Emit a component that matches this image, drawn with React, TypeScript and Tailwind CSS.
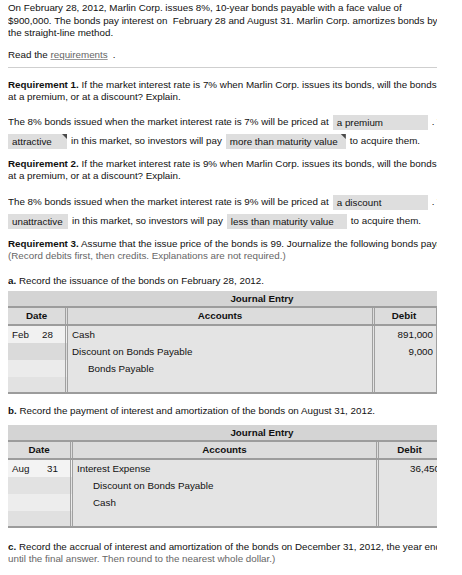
import React from 'react';

interface Row {
    month?: string;
    day?: string;
    account: string;
    indent?: boolean;
    debit?: string;
    dateBg: string;
}

interface JournalProps {
    dateW: string;
    accW: string;
    debitW: string;
    monthW: string;
    rows: Row[];
}

const Choice: React.FC<{ text: string; w: string; mark?: boolean }> = ({ text, w, mark }) => (
    <span className={`relative inline-block h-[15px] bg-[#dedede] pl-[4px] leading-[15px] align-middle mx-[4px] ${w}`}>
        {text}
        {mark && (
            <span className="absolute right-0 top-0 w-[5px] h-[5px] bg-[#4a4a4a] [clip-path:polygon(0_0,100%_0,100%_100%)]" />
        )}
    </span>
);

const JournalTable: React.FC<JournalProps> = ({ dateW, accW, debitW, monthW, rows }) => {
    return (
        <div className="w-[520px] bg-[#e4e4e4]">
            {/* barra de título */}
            <div className="h-[17px] bg-[#d4d4d4] border-b-2 border-[#9c9c9c] flex">
                <div className="w-[508px] text-center font-bold leading-[15px]">Journal Entry</div>
            </div>
            {/* cabeçalho das colunas */}
            <div className="h-[18px] bg-[#dcdcdc] border-b-2 border-[#9c9c9c] flex font-bold leading-[16px]">
                <div className={`${dateW} text-center border-r-[3px] border-double border-[#a0a0a0]`}>Date</div>
                <div className={`${accW} text-center border-r-[3px] border-double border-[#a0a0a0]`}>Accounts</div>
                <div className={`${debitW} text-center border-r-[3px] border-double border-[#a0a0a0]`}>Debit</div>
                <div className="flex-1 text-center">Credit</div>
            </div>
            {rows.map((row, i) => (
                <div key={i} className={`flex leading-[17px] ${i === rows.length - 1 ? 'h-[15px]' : 'h-[17px]'}`}>
                    <div className={`${dateW} ${row.dateBg} flex border-r-[3px] border-double border-[#a0a0a0] pl-[4px]`}>
                        <span className={monthW}>{row.month}</span>
                        <span>{row.day}</span>
                    </div>
                    <div className={`${accW} border-r-[3px] border-double border-[#a0a0a0] ${row.indent ? 'pl-[20px]' : 'pl-[4px]'}`}>
                        {row.account}
                    </div>
                    <div className={`${debitW} border-r-[3px] border-double border-[#a0a0a0] text-right`}>{row.debit}</div>
                    <div className="flex-1" />
                </div>
            ))}
            <div className="h-[2px] bg-[#9c9c9c]" />
        </div>
    );
};

export default function App() {
    const rowsA: Row[] = [
        { month: 'Feb', day: '28', account: 'Cash', debit: '891,000', dateBg: 'bg-[#f1f1f1]' },
        { account: 'Discount on Bonds Payable', debit: '9,000', dateBg: 'bg-[#dadada]' },
        { account: 'Bonds Payable', indent: true, dateBg: 'bg-[#ebebeb]' },
        { account: '', dateBg: 'bg-[#e2e2e2]' },
    ];
    const rowsB: Row[] = [
        { month: 'Aug', day: '31', account: 'Interest Expense', debit: '36,450', dateBg: 'bg-[#f3f3f3]' },
        { account: 'Discount on Bonds Payable', indent: true, dateBg: 'bg-[#e2e2e2]' },
        { account: 'Cash', indent: true, dateBg: 'bg-[#ededed]' },
        { account: '', dateBg: 'bg-[#e0e0e0]' },
    ];

    return (
        <div className="w-[462px] min-h-[575px] bg-white pl-[8px] text-[9.8px] text-[#111] font-['Liberation_Sans',Arial,sans-serif]">
            <div className="w-[429px] overflow-hidden pt-[2px]">
                <p className="w-[430px] leading-[12.5px]">
                    On February 28, 2012, Marlin Corp. issues 8%, 10-year bonds payable with a face value of $900,000. The bonds pay interest on&nbsp; February 28 and August 31. Marlin Corp. amortizes bonds by the straight-line method.
                </p>
                <p className="mt-[9px] leading-[12.5px]">
                    Read the <span className="text-[#666] underline decoration-[#999]">requirements</span>
                    <span className="ml-[5px]">.</span>
                </p>
                <div className="mt-[6px] h-px bg-[#cfcfcf]" />

                {/* Requisito 1 */}
                <div className="mt-[11px] leading-[12px] whitespace-nowrap">
                    <b>Requirement 1.</b> If the market interest rate is 7% when Marlin Corp. issues its bonds, will the bonds be issued
                    <br />
                    at a premium, or at a discount? Explain.
                </div>
                <div className="mt-[9px] leading-[19px] whitespace-nowrap">
                    The 8% bonds issued when the market interest rate is 7% will be priced at
                    <Choice text="a premium" w="w-[95px]" />. The bonds are
                    <br />
                    <Choice text="attractive" w="w-[59px] ml-0" mark />
                    in this market, so investors will pay
                    <Choice text="more than maturity value" w="w-[120px]" mark />
                    to acquire them.
                </div>

                {/* Requisito 2 */}
                <div className="mt-[8px] leading-[12px] whitespace-nowrap">
                    <b>Requirement 2.</b> If the market interest rate is 9% when Marlin Corp. issues its bonds, will the bonds be issued
                    <br />
                    at a premium, or at a discount? Explain.
                </div>
                <div className="mt-[10px] leading-[19px] whitespace-nowrap">
                    The 8% bonds issued when the market interest rate is 9% will be priced at
                    <Choice text="a discount" w="w-[95px]" />. The bonds are
                    <br />
                    <Choice text="unattractive" w="w-[60px] ml-0" />
                    in this market, so investors will pay
                    <Choice text="less than maturity value" w="w-[120px]" />
                    to acquire them.
                </div>

                {/* Requisito 3 */}
                <div className="mt-[8px] leading-[12px] whitespace-nowrap">
                    <b>Requirement 3.</b> Assume that the issue price of the bonds is 99. Journalize the following bonds payable transactions.
                    <br />
                    <span className="text-[#666]">(Record debits first, then credits. Explanations are not required.)</span>
                </div>

                <div className="mt-[13px] leading-[12px] whitespace-nowrap">
                    <b>a.</b> Record the issuance of the bonds on February 28, 2012.
                </div>
                <div className="mt-[4px]">
                    <JournalTable dateW="w-[60px]" accW="w-[307px]" debitW="w-[64px] pr-[3px]" monthW="w-[30px]" rows={rowsA} />
                </div>

                <div className="mt-[11px] leading-[12px] whitespace-nowrap">
                    <b>b.</b> Record the payment of interest and amortization of the bonds on August 31, 2012.
                </div>
                <div className="mt-[8px]">
                    <JournalTable dateW="w-[65px]" accW="w-[306px]" debitW="w-[68px] pr-[4px]" monthW="w-[35px]" rows={rowsB} />
                </div>

                <div className="mt-[13px] leading-[12px] whitespace-nowrap">
                    <b>c.</b> Record the accrual of interest and amortization of the bonds on December 31, 2012, the year end. (Round
                    <br />
                    <span className="text-[#666]">until the final answer. Then round to the nearest whole dollar.)</span>
                </div>
            </div>
        </div>
    );
}
